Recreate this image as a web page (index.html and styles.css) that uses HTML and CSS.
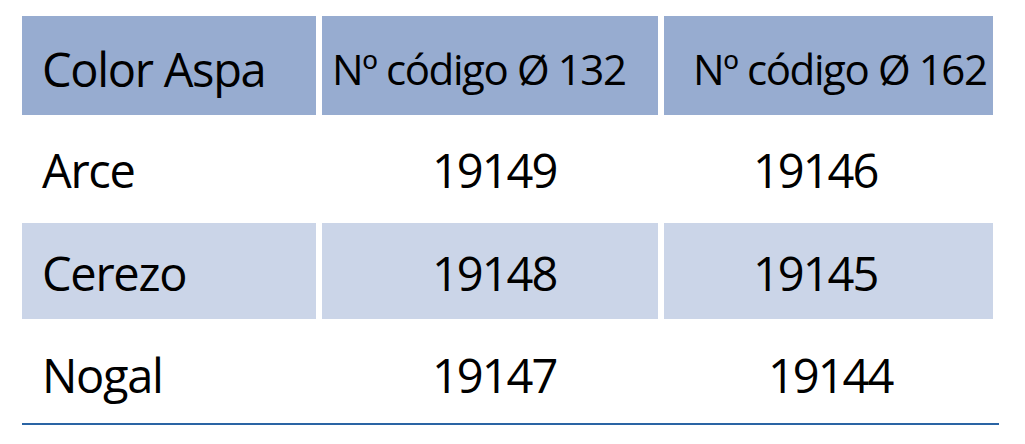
FILE: index.html
```html
<!DOCTYPE html>
<html lang="es">
<head>
<meta charset="utf-8">
<link rel="stylesheet" href="styles.css">
</head>
<body>
<div class="table">
  <div class="row head">
    <div class="cell c1"><span>Color Aspa</span></div>
    <div class="cell c2"><span class="hd">Nº código Ø 132</span></div>
    <div class="cell c3"><span class="hd">Nº código Ø 162</span></div>
  </div>
  <div class="row r-arce">
    <div class="cell c1"><span>Arce</span></div>
    <div class="cell c2 num"><span>19149</span></div>
    <div class="cell c3 num"><span>19146</span></div>
  </div>
  <div class="row shade r-cerezo">
    <div class="cell c1"><span>Cerezo</span></div>
    <div class="cell c2 num"><span>19148</span></div>
    <div class="cell c3 num"><span>19145</span></div>
  </div>
  <div class="row r-nogal">
    <div class="cell c1"><span>Nogal</span></div>
    <div class="cell c2 num"><span>19147</span></div>
    <div class="cell c3 num shift"><span>19144</span></div>
  </div>
</div>
</body>
</html>
```
FILE: styles.css
```css
html, body {
  margin: 0;
  padding: 0;
  background: #ffffff;
}
body {
  font-family: "Open Sans", "Liberation Sans", sans-serif;
  color: #000;
}
.table {
  margin: 16px 0 0 22px;
  width: 977px;
  border-bottom: 2px solid #2a64a4;
}
.row {
  display: grid;
  grid-template-columns: 300px 342px 335px;
}
.cell {
  display: flex;
  align-items: center;
  border-right: 6px solid #fff;
  font-size: 47px;
  letter-spacing: -1.3px;
  white-space: nowrap;
  box-sizing: border-box;
}
.head { height: 99px; }
.head .cell { background: #97acd0; padding-top: 6px; }
.r-arce { height: 108px; }
.r-arce .cell { padding-top: 2px; }
.r-cerezo { height: 96px; }
.r-cerezo .cell { padding-top: 3px; }
.r-nogal { height: 104px; }
.r-nogal .cell { padding-top: 8px; }
.shade .cell { background: #cbd5e8; }
.c1 { padding-left: 20px; }
.head .c2 { padding-left: 10px; }
.head .c3 { padding-left: 29px; }
.hd { font-size: 42px; letter-spacing: -1.4px; }
.num { letter-spacing: -2px; }
.num.c2 { padding-left: 110px; }
.num.c3 { padding-left: 89px; }
.num.shift { padding-left: 104px; }
```
